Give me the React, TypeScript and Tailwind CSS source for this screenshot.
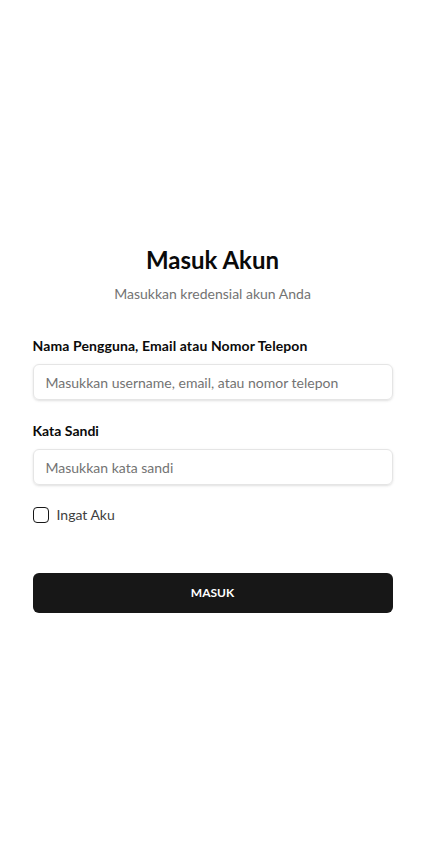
import React, { useState } from 'react';

export default function App() {
  const [remember, setRemember] = useState(false);

  return (
    <div
      className="min-h-screen bg-white flex items-center justify-center px-8"
      style={{ fontFamily: 'Lato, "Noto Sans", sans-serif' }}
    >
      <div className="w-full max-w-[360px]">
        {/* Header */}
        <div className="text-center mb-[32px]">
          <h1 className="text-[24px] leading-[32px] font-bold text-[#0a0a0a]">Masuk Akun</h1>
          <p className="mt-[8px] text-[14px] leading-[20px] text-[#737373]">Masukkan kredensial akun Anda</p>
        </div>

        {/* Username */}
        <div className="mb-[21px]">
          <label className="block text-[14px] leading-[20px] font-bold text-[#0a0a0a] mb-[8px] tracking-[0.1px]">
            Nama Pengguna, Email atau Nomor Telepon
          </label>
          <input
            type="text"
            placeholder="Masukkan username, email, atau nomor telepon"
            className="w-full h-[36px] px-[12px] rounded-[6px] border border-[#e5e5e5] shadow-sm text-[14px] placeholder:text-[#737373] outline-none"
          />
        </div>

        {/* Password */}
        <div className="mb-[20px]">
          <label className="block text-[14px] leading-[20px] font-bold text-[#0a0a0a] mb-[8px]">
            Kata Sandi
          </label>
          <input
            type="password"
            placeholder="Masukkan kata sandi"
            className="w-full h-[36px] px-[12px] rounded-[6px] border border-[#e5e5e5] shadow-sm text-[14px] placeholder:text-[#737373] outline-none"
          />
        </div>

        {/* Remember me */}
        <label className="flex items-center gap-[8px] mb-[48px]">
          <span
            onClick={() => setRemember(!remember)}
            className={`w-[16px] h-[16px] rounded-[4px] border border-[#171717] ${remember ? 'bg-[#171717]' : 'bg-white'}`}
          />
          <span className="text-[14px] leading-[20px] text-[#404040]">Ingat Aku</span>
        </label>

        {/* Submit */}
        <button className="w-full h-[40px] rounded-[6px] bg-[#171717] text-white text-[12px] font-bold">
          MASUK
        </button>
      </div>
    </div>
  );
}
